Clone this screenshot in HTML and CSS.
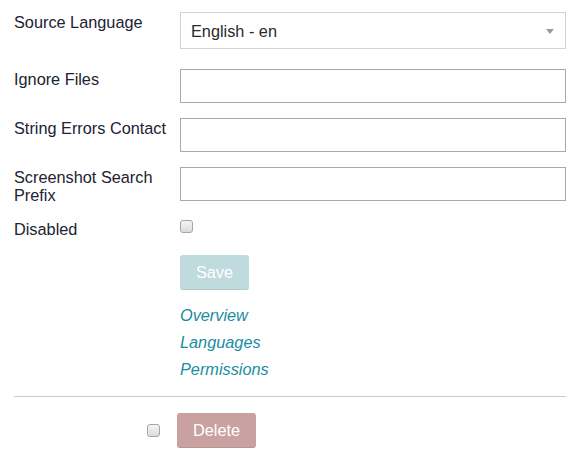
FILE: index.html
```html
<!DOCTYPE html>
<html>
<head>
<meta charset="utf-8">
<link rel="stylesheet" href="styles.css">
</head>
<body>
<form class="form">
  <div class="field field-select">
    <label class="label">Source Language</label>
    <div class="select">
      <span class="select-value">English - en</span>
      <span class="select-arrow"></span>
    </div>
  </div>
  <div class="field">
    <label class="label">Ignore Files</label>
    <input class="input" type="text">
  </div>
  <div class="field">
    <label class="label">String Errors Contact</label>
    <input class="input" type="text">
  </div>
  <div class="field">
    <label class="label">Screenshot Search<br>Prefix</label>
    <input class="input" type="text">
  </div>
  <div class="field field-check">
    <label class="label">Disabled</label>
    <div class="check-cell"><input class="checkbox" type="checkbox"></div>
  </div>
  <div class="actions">
    <button class="btn btn-save" type="button">Save</button>
    <ul class="links">
      <li><a class="link" href="#">Overview</a></li>
      <li><a class="link" href="#">Languages</a></li>
      <li><a class="link" href="#">Permissions</a></li>
    </ul>
  </div>
  <hr class="divider">
  <div class="delete-row">
    <input class="checkbox" type="checkbox">
    <button class="btn btn-delete" type="button">Delete</button>
  </div>
</form>
</body>
</html>
```
FILE: styles.css
```css
html, body {
  margin: 0;
  padding: 0;
  background: #ffffff;
}
body {
  font-family: "Liberation Sans", Arial, sans-serif;
  font-size: 16.3px;
  color: #222233;
}
.form {
  padding: 12px 10px 0 14px;
}
.field {
  display: grid;
  grid-template-columns: 166px 1fr;
  margin-bottom: 15px;
  align-items: start;
}
.field-select {
  margin-bottom: 20px;
}
.label {
  padding-top: 1px;
  line-height: 18px;
}
.select {
  box-sizing: border-box;
  height: 37px;
  border: 1px solid #d2d2d2;
  background: #fff;
  padding: 0 11px 0 10px;
  display: flex;
  align-items: center;
  justify-content: space-between;
  color: #2a2a2a;
}
.select-value {
  line-height: 18px;
  padding-top: 1px;
}
.select-arrow {
  width: 0;
  height: 0;
  border-left: 4.5px solid transparent;
  border-right: 4.5px solid transparent;
  border-top: 5px solid #9a9a9a;
  margin-top: 1px;
}
.input {
  box-sizing: border-box;
  height: 34px;
  width: 100%;
  margin: 0;
  border: 1px solid #a9a9a9;
  border-radius: 0;
  background: #fff;
  font: inherit;
  padding: 0 10px;
}
.check-cell {
  padding-top: 1px;
  line-height: 0;
}
.checkbox {
  -webkit-appearance: none;
  appearance: none;
  box-sizing: border-box;
  width: 13px;
  height: 13px;
  margin: 0;
  border: 1px solid #a6a6a6;
  border-radius: 3px;
  background: linear-gradient(#f4f4f4, #dcdcdc);
}
.actions {
  margin-left: 166px;
  padding-top: 2px;
}
.btn {
  box-sizing: border-box;
  height: 35px;
  border: none;
  border-radius: 3px;
  color: #ffffff;
  font: inherit;
  padding: 0;
  box-shadow: inset 0 -1px 0 rgba(0, 0, 0, 0.08);
}
.btn-save {
  width: 69px;
  background: #bfdbde;
  display: block;
}
.btn-delete {
  width: 79px;
  background: #c9a1a0;
}
.links {
  list-style: none;
  margin: 12px 0 0 0;
  padding: 0;
  line-height: 27px;
}
.link {
  color: #1a8ca3;
  font-style: italic;
  text-decoration: none;
}
.divider {
  border: none;
  border-top: 1px solid #cccccc;
  margin: 13px 0 16px 0;
  height: 0;
}
.delete-row {
  display: flex;
  align-items: center;
  padding-left: 133px;
  gap: 17px;
}
```
